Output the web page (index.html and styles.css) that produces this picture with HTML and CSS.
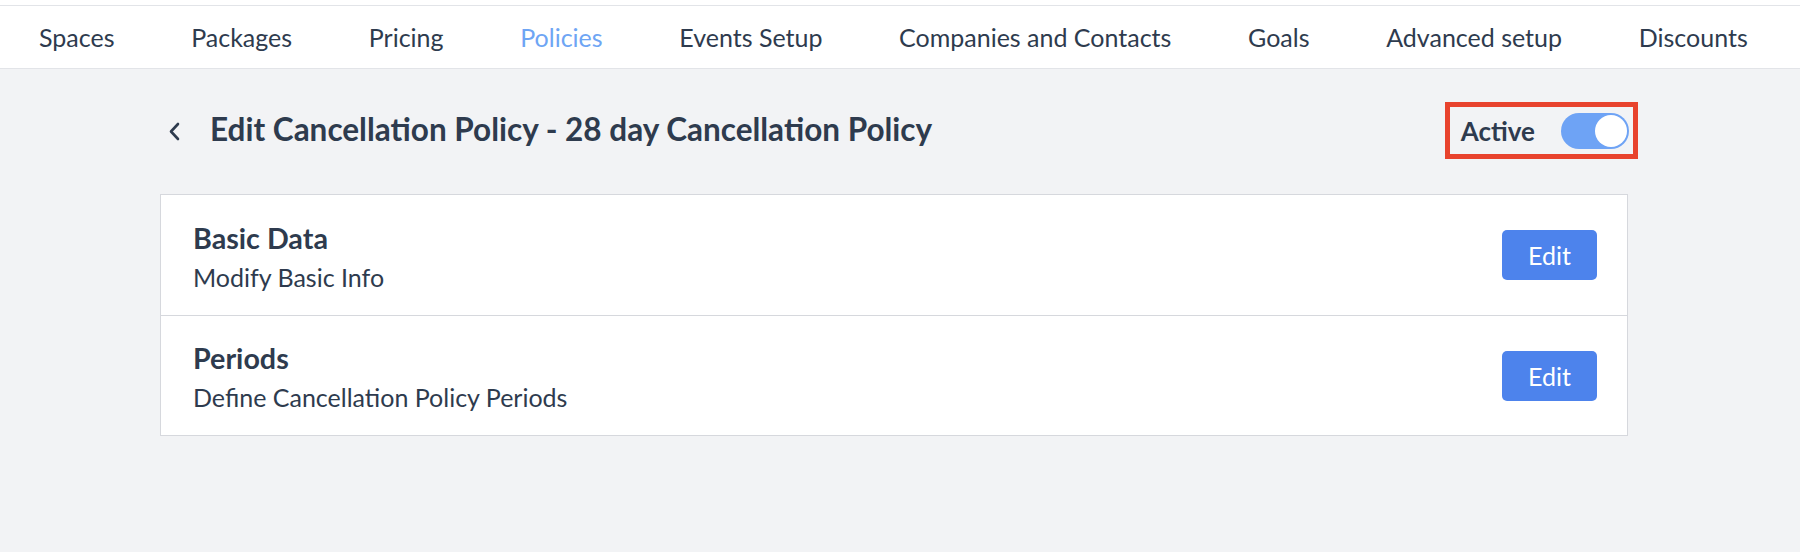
FILE: index.html
```html
<!DOCTYPE html>
<html>
<head>
<meta charset="utf-8">
<link rel="stylesheet" href="styles.css">
</head>
<body>
<div class="topstrip"></div>
<nav class="nav">
  <a class="nav-item">Spaces</a>
  <a class="nav-item">Packages</a>
  <a class="nav-item">Pricing</a>
  <a class="nav-item active">Policies</a>
  <a class="nav-item">Events Setup</a>
  <a class="nav-item">Companies and Contacts</a>
  <a class="nav-item">Goals</a>
  <a class="nav-item">Advanced setup</a>
  <a class="nav-item">Discounts</a>
</nav>
<main class="container">
  <div class="page-header">
    <div class="title-group">
      <svg class="back" width="12" height="19" viewBox="0 0 12 19"><path d="M10 2 L3 9.5 L10 17" fill="none" stroke="#2e3b4e" stroke-width="2.6" stroke-linecap="round" stroke-linejoin="round"/></svg>
      <h1 class="title">Edit Cancellation Policy - 28 day Cancellation Policy</h1>
    </div>
    <div class="active-box">
      <span class="active-label">Active</span>
      <span class="toggle"><span class="knob"></span></span>
    </div>
  </div>
  <div class="card">
    <div class="row">
      <div class="row-text">
        <div class="row-title">Basic Data</div>
        <div class="row-desc">Modify Basic Info</div>
      </div>
      <button class="btn">Edit</button>
    </div>
    <div class="row">
      <div class="row-text">
        <div class="row-title">Periods</div>
        <div class="row-desc">Define Cancellation Policy Periods</div>
      </div>
      <button class="btn">Edit</button>
    </div>
  </div>
</main>
</body>
</html>
```
FILE: styles.css
```css
* { box-sizing: border-box; }
html, body { margin: 0; padding: 0; }
body {
  background: #f2f3f5;
  font-family: Lato, "Open Sans", sans-serif;
  color: #2e3b4e;
  width: 1800px;
  height: 552px;
  overflow: hidden;
}
.topstrip { height: 5px; background: #ffffff; }
.nav {
  display: flex;
  align-items: center;
  gap: 76.7px;
  height: 64px;
  padding-left: 39px;
  background: #ffffff;
  border-top: 1px solid #e2e4e8;
  border-bottom: 1px solid #e2e4e8;
}
.nav-item {
  font-size: 25px;
  color: #2e3b4e;
  white-space: nowrap;
  cursor: pointer;
}
.nav-item.active { color: #6ea5f4; }
.container {
  width: 1468px;
  margin-left: 160px;
}
.page-header {
  display: flex;
  align-items: center;
  justify-content: space-between;
  height: 57px;
  margin-top: 33px;
  margin-right: -10px;
}
.title-group {
  display: flex;
  align-items: center;
  padding-left: 8px;
}
.back { margin-right: 30px; margin-top: 2px; }
.title {
  margin: 0 0 1px;
  font-size: 31.5px;
  font-weight: 700;
  line-height: 1.2;
}
.active-box {
  display: flex;
  align-items: center;
  height: 57px;
  border: 5px solid #e8432d;
  padding: 0 4px 0 11px;
}
.active-label {
  font-size: 26px;
  font-weight: 700;
  margin-right: 26px;
}
.toggle {
  display: flex;
  align-items: center;
  justify-content: flex-end;
  width: 68px;
  height: 36px;
  border-radius: 18px;
  background: #6ea3f5;
  padding: 2px;
}
.knob {
  width: 32px;
  height: 32px;
  border-radius: 50%;
  background: #ffffff;
}
.card {
  margin-top: 35px;
  background: #ffffff;
  border: 1px solid #d6d8dd;
}
.row {
  display: flex;
  align-items: center;
  justify-content: space-between;
  height: 120px;
  padding: 0 30px 0 32px;
}
.row + .row { border-top: 1px solid #d6d8dd; }
.row-text { padding-top: 3px; }
.row-title {
  font-size: 28.7px;
  font-weight: 700;
  line-height: 34px;
}
.row-desc {
  font-size: 25px;
  line-height: 32px;
  margin-top: 6px;
}
.btn {
  width: 95px;
  height: 50px;
  border: none;
  border-radius: 5px;
  background: #4d83ec;
  color: #ffffff;
  font-family: Lato, "Open Sans", sans-serif;
  font-size: 25px;
  padding: 0;
}
```
